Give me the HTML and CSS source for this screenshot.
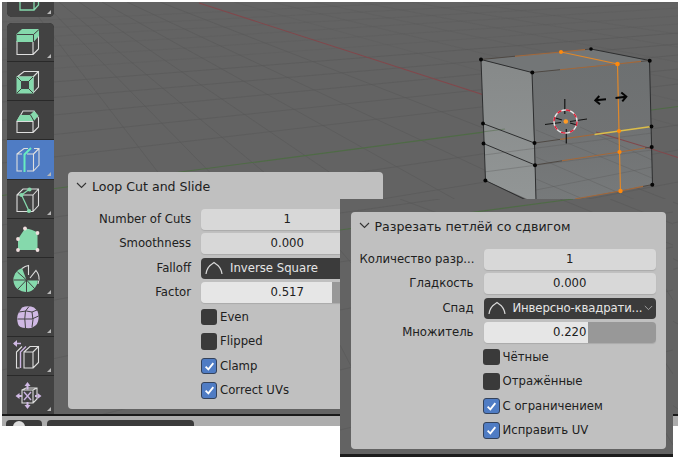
FILE: index.html
```html
<!DOCTYPE html>
<html lang="en">
<head>
<meta charset="utf-8">
<title>Loop Cut and Slide</title>
<link rel="stylesheet" href="styles.css">
</head>
<body>
<main class="editor">
  <section class="viewport">
    <svg class="scene" viewBox="2 2 676 411.5">
      <defs>
        <linearGradient id="front" x1="0" y1="0" x2="0" y2="1"><stop offset="0" stop-color="#6d7071"/><stop offset=".55" stop-color="#717374"/><stop offset="1" stop-color="#777a7b"/></linearGradient>
        <linearGradient id="side" x1="0" y1="0" x2="0" y2="1"><stop offset="0" stop-color="#868989"/><stop offset="1" stop-color="#929696"/></linearGradient>
      </defs>
      <path class="grid far" d="M2 22L678-10M2 30L678-4M2 39L678 2M2 49L678 8M2 60L678 16M2 72L678 24M234 2L678 126M272 2L678 101M314 2L678 80M359 2L678 62M410 2L678 47M463 2L678 34"/>
      <path class="grid" d="M2 86L678 33M2 102L678 44M2 120L678 55M2 140L678 69M2 163L678 84M2 225L678 125M2 262L678 150M2 310L678 182M2 370L678 222M2 440L678 268M160 2L678 204M127 2L678 261M102 2L678 324M79 2L678 409M59 2L678 516M43 2L678 650M27 2L678 848"/>
      <path class="axis-x" d="M199 3L678 157.5"/>
      <path class="axis-y" d="M2 195.5L678 106.500"/>
      <path fill="url(#side)" d="M481 59.500L532 72.500L536 203L485.500 180.500Z"/>
      <path fill="url(#front)" d="M532 72.500L649.500 60.500L652.500 184.500L560 202H536Z"/>
      <path fill="#737677" d="M481 59.500L591 49L649.500 60.500L532 72.500Z"/>
      <path class="grid inner" d="M484 155L652 133M484 172L652 150M536 190L652 167M536 130L652 178M580 127L652 160M536 157L640 202M536 179L590 202"/>
      <path class="axis-y faint" d="M482 132L505 129"/>
      <path class="axis-x" d="M596 132L652 149"/>
      <path class="edge" d="M532 72.500L481 59.500L485.500 180.500L526 200M591 49L649.500 60.500L652.500 184.500M532 72.500L534.500 143L536 200M483 123.500L534.500 143M483.500 143.500L535 165"/>
      <path class="edge thin" d="M481 59.500L515 56.250M585 49.600L591 49M532 72.500L560 69.700M641 61.400L649.500 60.500M534.500 143L560 139.400M535 165L562 160.800M645 148L651.700 147M652.500 184.500L643 186.400"/>
      <path class="fade" d="M515 56.250L561 52L585 49.600M560 69.700L617.500 64L641 61.400M560 139.400L594 134.500M562 160.800L619.500 152L645 148M575 199L620.500 191L643 186.400"/>
      <path class="loop" d="M561 52L617.500 64L619 131L619.500 152L620.500 191"/>
      <path class="yellow" d="M594.500 134.500L651.500 126.500"/>
      <g class="verts"><circle cx="481" cy="59.500" r="2"/><circle cx="591" cy="49" r="1.800"/><circle cx="649.700" cy="60.700" r="2"/><circle cx="532.300" cy="72.500" r="2"/><circle cx="483" cy="123.500" r="1.900"/><circle cx="483.500" cy="143.500" r="1.900"/><circle cx="485.400" cy="180.400" r="2"/><circle cx="534.500" cy="143" r="2"/><circle cx="535" cy="165.200" r="2"/><circle cx="651.500" cy="126.500" r="1.900"/><circle cx="651.700" cy="147" r="2"/><circle cx="652.300" cy="184.700" r="2"/></g>
      <g class="picked"><circle cx="561" cy="52" r="2"/><circle cx="617.500" cy="64" r="2.300"/><circle cx="619" cy="131" r="2.100"/><circle cx="619.500" cy="152" r="2.100"/><circle cx="620.500" cy="191" r="2.200"/></g>
      <path class="cross" d="M564.800 99V114M566.300 129V143.500M545 124.500L561 122.500M570 121.500L587 119M555.500 118L562 120M570 123L577 125"/>
      <circle class="ring" cx="565.500" cy="121.500" r="11.500"/>
      <circle class="ring dashes" cx="565.500" cy="121.500" r="11.500"/>
      <circle class="origin" cx="565.800" cy="121.500" r="2.300"/>
      <path class="arrow" d="M606 99.300L595.500 100.300M599.300 96L595.300 100.300L600 104.300M615.500 98L626 96.700M621.300 92.500L626.300 96.600L622.300 101.300"/>
    </svg>

    <nav class="tools">
      <div class="group top">
        <div class="tool"><svg viewBox="0 0 46 39"><path class="g" d="M13 12V33H27V12M27 33L31.500 28V12"/></svg></div>
      </div>
      <div class="group">
        <div class="tool more"><svg viewBox="0 0 46 39"><path class="w" d="M10 18V31.500H26V18M26 31.500L31.500 26V12"/><path class="gf" d="M9.500 11L15 6H32L26.500 11V19H9.500ZM26.500 11L32 6V13L26.500 19Z"/><path class="cut" d="M10 11.500H26.500L32 6.500M26.500 11.500V19"/></svg></div>
        <div class="tool"><svg viewBox="0 0 46 39"><path class="w" d="M10 15L17 9.500H31.500V25L26 31M26 15L31.500 9.500M10 15H26V31"/><path class="gf" fill-rule="evenodd" d="M9.500 14.500H26.500V31.500H9.500ZM14 19V27H22V19Z"/><path class="cut" d="M10 15L14 19M26 15L22 19M26 31L22 27M10 31L14 27"/></svg></div>
        <div class="tool"><svg viewBox="0 0 46 39"><path class="w" d="M10 21V31.500H26V20.500H10L16 10H27L31.500 17V26L26 31.500"/><path class="gf" d="M9.500 20L13 14H24L26.500 20ZM23 14L27 10L31.500 14.500L27 20Z"/><path class="cut" d="M23.500 14L27 20"/></svg></div>
        <div class="tool more active"><svg viewBox="0 0 46 39"><path class="w" d="M15 14H10V31H15M20 14H26.500V31H20M10 14L17 8.500H21M27 8.500H32V25L26.500 31M26.500 14L32 8.500"/><path class="g thick" d="M17.500 32V14.500L24 8"/></svg></div>
        <div class="tool more"><svg viewBox="0 0 46 39"><path class="w" d="M10 15H26V31.500H10ZM10 15L16 9H31.500V25.500L26 31.500M26 15L31.500 9"/><path class="g" d="M22 9.500L14.500 15L22 31"/><g class="gf"><circle cx="22.500" cy="9.500" r="2.100"/><circle cx="14.500" cy="15" r="2.100"/><circle cx="22" cy="31" r="2.100"/></g></svg></div>
        <div class="tool"><svg viewBox="0 0 46 39"><path class="gf" d="M11 31V20L18 9.500Q26 10 30.500 14V31Z"/><g class="dots"><circle cx="18" cy="9.500" r="1.900"/><circle cx="30.500" cy="14" r="1.900"/><circle cx="11" cy="20" r="1.900"/><circle cx="11" cy="31" r="1.900"/><circle cx="30.500" cy="31" r="1.900"/></g></svg></div>
        <div class="tool more"><svg viewBox="0 0 46 39"><path class="gf" d="M19.500 22L15 10A12.300 12.300 0 1 0 31 22Z"/><path class="w" d="M15 10.500Q18 8 21.500 7.500V17M23 20L29 12.500Q32.500 17 32 21.500L31 26"/><path class="cut" d="M19.500 22L10.500 14M19.500 22H7M19.500 22L11 31M19.500 22V35M19.500 22L28 31M19.500 22H32"/></svg></div>
        <div class="tool more"><svg viewBox="0 0 46 39"><path class="pf" d="M15 9.500Q21 7 27 9.500L30.500 13Q33 20 30 26Q26 31 19 30Q12 30 11 26Q9 19 12 14Z"/><path class="cut" d="M10.500 21H25L31.500 18M18.500 13Q17 20 18.500 30M12 14Q20 12 25 14L30 12M25 14Q27 22 25 29M18.500 13L22 8.500"/></svg></div>
        <div class="tool more"><svg viewBox="0 0 46 39"><path class="w" d="M17 15H26V31H17ZM17 15L23 9.500H31.500V25.500L26 31M26 15L31.500 9.500M12.500 31H9.500V15L15 9.500"/><path class="p" d="M13.500 31V15L19 9.500M14 6.500H7"/><path class="pf" d="M10 3V10L6 6.500Z"/></svg></div>
        <div class="tool more"><svg viewBox="0 0 46 39"><path class="w" d="M15 14H26V27H15ZM15 14L19 12H30V23L26 27M26 14L30 12"/><path class="p" d="M17 16L24 24M24 16L17 24"/><path class="pf" d="M20.500 6L23.500 10H17.500ZM20.500 33L23.500 29H17.500ZM8.500 20L12.500 17V23ZM34.500 20L30.500 17V23ZM19.500 9.500h2v4h-2zM19.500 26h2v3h-2zM12 19h3v2h-3zM28 19h3v2h-3z"/></svg></div>
      </div>
    </nav>

    <section class="panel first">
      <header class="heading"><svg class="chevron" viewBox="0 0 11 7"><path d="M1 1L5.500 5.500L10 1"/></svg><h2>Loop Cut and Slide</h2></header>
      <div class="row"><label>Number of Cuts</label><div class="field">1</div></div>
      <div class="row"><label>Smoothness</label><div class="field">0.000</div></div>
      <div class="row"><label>Falloff</label><div class="field select"><svg class="curve" viewBox="0 0 18 14"><path d="M1 13Q2 6 7 3L9 1.500L11 3Q16 6 17 13"/></svg><span>Inverse Square</span></div></div>
      <div class="row"><label>Factor</label><div class="field slider" style="--value:75.8%">0.517</div></div>
      <div class="row check"><i class="box"></i><span>Even</span></div>
      <div class="row check"><i class="box"></i><span>Flipped</span></div>
      <div class="row check"><i class="box on"><svg viewBox="0 0 16 16"><path d="M4 8.500L7 11.500L12.500 4.500"/></svg></i><span>Clamp</span></div>
      <div class="row check"><i class="box on"><svg viewBox="0 0 16 16"><path d="M4 8.500L7 11.500L12.500 4.500"/></svg></i><span>Correct UVs</span></div>
    </section>
  </section>
  <footer class="status"><div class="pill small"><i></i></div><div class="pill"></div></footer>
</main>

<aside class="inset" lang="ru">
  <svg class="scene" viewBox="340 199 333 256">
    <path class="grid" d="M340 213L440 199M340 262L673 212M340 310L673 247M340 370L673 290M340 430L673 350M400 199L440 214M560 199L673 245M610 199L673 224M340 250L352 264M660 280L673 300M660 355L673 374M340 345L352 368M664 430L673 445"/>
    <path class="axis-y" d="M340 230L573 199"/>
  </svg>
  <section class="panel second">
    <header class="heading"><svg class="chevron" viewBox="0 0 11 7"><path d="M1 1L5.500 5.500L10 1"/></svg><h2>Разрезать петлёй со сдвигом</h2></header>
    <div class="row"><label>Количество разр...</label><div class="field">1</div></div>
    <div class="row"><label>Гладкость</label><div class="field">0.000</div></div>
    <div class="row"><label>Спад</label><div class="field select"><svg class="curve" viewBox="0 0 18 14"><path d="M1 13Q2 6 7 3L9 1.500L11 3Q16 6 17 13"/></svg><span class="long">Инверсно-квадрати...</span><svg class="chevron drop" viewBox="0 0 11 7"><path d="M1 1L5.500 5.500L10 1"/></svg></div></div>
    <div class="row"><label>Множитель</label><div class="field slider" style="--value:60.3%">0.220</div></div>
    <div class="row check"><i class="box"></i><span>Чётные</span></div>
    <div class="row check"><i class="box"></i><span>Отражённые</span></div>
    <div class="row check"><i class="box on"><svg viewBox="0 0 16 16"><path d="M4 8.500L7 11.500L12.500 4.500"/></svg></i><span>С ограничением</span></div>
    <div class="row check"><i class="box on"><svg viewBox="0 0 16 16"><path d="M4 8.500L7 11.500L12.500 4.500"/></svg></i><span>Исправить UV</span></div>
  </section>
</aside>
</body>
</html>
```
FILE: styles.css
```css
* { box-sizing: border-box; }
body {
  margin: 0;
  padding: 2px;
  width: 680px;
  height: 460px;
  overflow: hidden;
  position: relative;
  background: #fff;
  color: #202020;
  font: 11.7px/21px "DejaVu Sans", sans-serif;
}
.editor { width: 676px; height: 424px; overflow: hidden; display: flex; flex-direction: column; }
.viewport { position: relative; height: 413.5px; flex: none; overflow: hidden; background: #636363; border-bottom: 2px solid #191919; }
.scene { position: absolute; left: 0; top: 0; width: 100%; height: 411.5px; fill: none; }

/* 3D scene */
.grid { stroke: #585858; stroke-width: 1; opacity: .55; }
.grid.far { opacity: .22; }
.grid.inner { opacity: .35; }
.axis-x { stroke: #80484c; stroke-width: 1.1; }
.axis-y { stroke: #4f6b46; stroke-width: 1.1; }
.axis-y.faint { opacity: .5; }
.edge { stroke: #2d2e2f; stroke-width: 1; }
.edge.thin { stroke: #4b443e; stroke-width: .9; }
.fade { stroke: #a3683a; stroke-width: 1.1; }
.loop { stroke: #e0882a; stroke-width: 1.2; }
.yellow { stroke: #dcbd48; stroke-width: 1.7; }
.verts { fill: #050505; }
.picked { fill: #ff8a0c; }
.cross { stroke: #151515; stroke-width: 1.2; }
.ring { stroke: #e8e8e8; stroke-width: 1.4; }
.ring.dashes { stroke: #df1f37; stroke-dasharray: 4.5 4.53; }
.origin { fill: #ff9b26; }
.arrow { stroke: #050505; stroke-width: 2; }

/* Toolbar */
.tools { position: relative; width: 46.5px; margin-left: 5px; display: flex; flex-direction: column; gap: 6px; }
.group { background: #292929; border-radius: 5px 5px 0 0; overflow: hidden; display: flex; flex-direction: column; gap: 1px; flex: none; }
.group.top { height: 14.5px; border-radius: 0 0 5px 5px; justify-content: flex-end; }
.tool { position: relative; height: 38.3px; flex: none; background: #424242; }
.tool svg { display: block; width: 46px; height: 39px; fill: none; }
.group.top svg { margin-top: -1px; }
.tool.active { background: #4f7cc4; }
.tool.more::after, .top .tool::after {
  content: ""; position: absolute; right: 3px; bottom: 3px;
  border: 2px solid transparent; border-right-color: #b8b8b8; border-bottom-color: #b8b8b8;
}
.w { stroke: #dedede; stroke-width: 1.1; }
.g { stroke: #85d9ac; stroke-width: 1.3; }
.g.thick { stroke: #67ecc0; stroke-width: 2; }
.gf { fill: #85d9ac; }
.p { stroke: #ccb4e2; stroke-width: 1.4; }
.pf { fill: #d0b9e4; }
.cut { stroke: #424242; stroke-width: 1; }
.dots { fill: #f0dede; }

/* Operator panels */
.panel { position: absolute; width: 315px; height: 237.500px; padding: 0 9px; border-radius: 4px; background: #c0c0c0; }
.first { left: 66px; top: 169.5px; }
.second { left: 10.5px; top: 12.5px; }
.heading { height: 29px; margin: 0 0 8px -1px; display: flex; align-items: center; gap: 5px; }
.heading h2 { margin: 0; font-size: 12.6px; font-weight: normal; white-space: nowrap; }
.heading .chevron { margin-top: -1px; }
.chevron { width: 11px; height: 7px; fill: none; stroke: #333; stroke-width: 1.1; }
.row { height: 21px; margin-bottom: 3.5px; display: flex; align-items: center; white-space: nowrap; }
.row label { width: 114px; margin-right: 10px; text-align: right; flex: none; }
.field { width: 172.5px; height: 21px; text-align: center; border-radius: 4px; background: #d8d8d8; box-shadow: 0 1px 1px #aaa; }
.slider { background: linear-gradient(90deg, #e6e6e6 var(--value), #989898 var(--value)); }
.select { display: flex; align-items: center; padding: 0 3px 0 4px; background: #3b3b3b; color: #e6e6e6; box-shadow: none; }
.curve { width: 18px; height: 14px; margin-right: 7px; fill: none; stroke: #d8d8d8; stroke-width: 1.2; flex: none; }
.long { letter-spacing: -.14px; }
.drop { width: 9px; height: 6px; margin-left: auto; stroke: #aaa; flex: none; }
.check { padding-left: 123.5px; gap: 3px; }
.box { width: 16.5px; height: 16.5px; border-radius: 3px; background: #3a3a3a; flex: none; }
.box.on { background: #4f7cc4; border: 1px solid #34425a; }
.box svg { display: block; width: 14.5px; height: 14.5px; fill: none; stroke: #fff; stroke-width: 2; }

/* Status strip */
.status { height: 10.5px; flex: none; display: flex; gap: 5px; padding: 4.5px 4px 0; background: #adadad; }
.pill { width: 147px; height: 12px; border-radius: 4px; background: #3b3b3b; }
.pill.small { width: 36px; overflow: hidden; }
.pill i { display: block; width: 12px; height: 12px; margin: 1px 0 0 7px; border-radius: 50%; background: #ddd; }

/* Overlaid second window */
.inset { position: absolute; left: 340px; top: 199px; width: 333px; height: 258px; overflow: hidden; background: #636363; border-bottom: 3px solid #1c1c1c; }
.inset .scene { height: 256px; }
```
